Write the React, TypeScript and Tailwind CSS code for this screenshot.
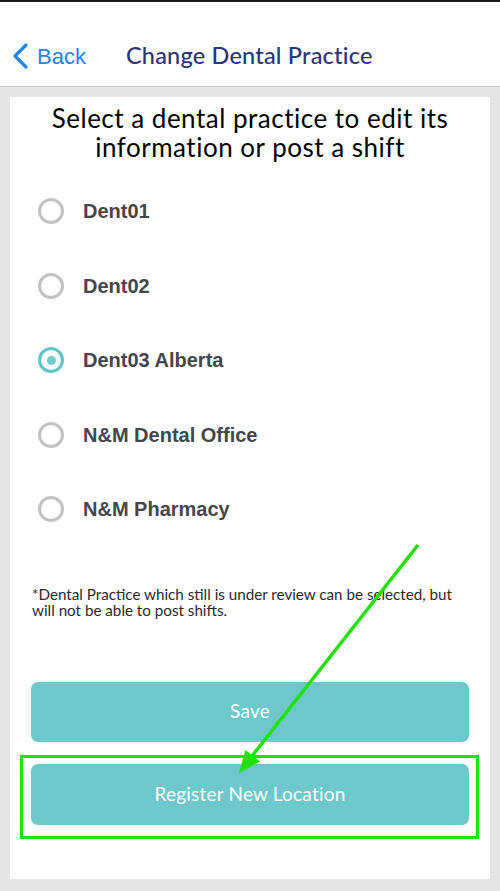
import React from "react";

const items = [
  { name: "Dent01", selected: false },
  { name: "Dent02", selected: false },
  { name: "Dent03 Alberta", selected: true },
  { name: "N&M Dental Office", selected: false },
  { name: "N&M Pharmacy", selected: false },
];

export default function App() {
  return (
    <div className="relative flex h-[891px] w-[500px] flex-col overflow-hidden bg-[#e6e6e6] [font-family:Lato,'Open_Sans',sans-serif]">
      <div className="h-[2px] w-full bg-[#1a1a1a]" />
      <header className="flex h-[85px] items-center border-b border-[#c4c4c4] bg-white pt-[24px]">
        <div className="flex items-center pl-[11px] text-[#1d84f2]">
          <svg width="19" height="28" viewBox="0 0 19 28" fill="none">
            <path d="M15 3 L4 14 L15 25" stroke="#1d84f2" strokeWidth="3.2" strokeLinecap="round" strokeLinejoin="round" />
          </svg>
          <span className="ml-[7px] text-[22px] [font-family:'Liberation_Sans',Arial,sans-serif]">Back</span>
        </div>
        <div className="ml-[40px] text-[23.5px] font-medium tracking-[0.2px] text-[#2c3478]">Change Dental Practice</div>
      </header>
      <div className="flex flex-1 flex-col px-[10px] pt-[10px] pb-[12px]">
        <div className="flex flex-1 flex-col bg-white">
          <h1 className="pt-[7px] text-center text-[26px] leading-[29px] tracking-[0.5px] text-black">
            Select a dental practice to edit its
            <br />
            information or post a shift
          </h1>
          <div className="mt-[12px] flex flex-col pl-[28px]">
            {items.map((it) => (
              <div key={it.name} className="flex h-[74.5px] items-center">
                {it.selected ? (
                  <div className="flex h-[26px] w-[26px] items-center justify-center rounded-full border-[3.5px] border-[#5ec4c9]">
                    <div className="h-[9px] w-[9px] rounded-full bg-[#6ccdd0]" />
                  </div>
                ) : (
                  <div className="h-[26px] w-[26px] rounded-full border-[3.5px] border-[#c2c2c2]" />
                )}
                <span className="ml-[19px] text-[20px] font-bold text-[#44464a] [font-family:'Liberation_Sans',Arial,sans-serif]">
                  {it.name}
                </span>
              </div>
            ))}
          </div>
          <p className="mt-[39px] pl-[22px] pr-[22px] text-[15.2px] leading-[16px] text-[#2a2a2a]">
            *Dental Practice which still is under review can be selected, but will not be able to post shifts.
          </p>
          <div className="mt-[64px] flex flex-col px-[21px]">
            <button className="h-[60px] rounded-[7px] bg-[#6ec8cb] text-[19px] tracking-[0.2px] text-white">Save</button>
            <div className="relative mt-[22px]">
              <div className="pointer-events-none absolute top-[-9px] right-[-10px] bottom-[-14px] left-[-11px] border-[3px] border-[#22e000]" />
              <button className="relative h-[61px] w-full rounded-[7px] bg-[#6ec8cb] text-[19px] tracking-[0.2px] text-white">
                Register New Location
              </button>
            </div>
          </div>
        </div>
      </div>
      <svg className="pointer-events-none absolute inset-0" width="500" height="891" viewBox="0 0 500 891">
        <line x1="418" y1="545" x2="252" y2="756" stroke="#22e000" strokeWidth="3.5" />
        <polygon points="239,773 245.5,750 260,761.5" fill="#22e000" />
      </svg>
    </div>
  );
}
